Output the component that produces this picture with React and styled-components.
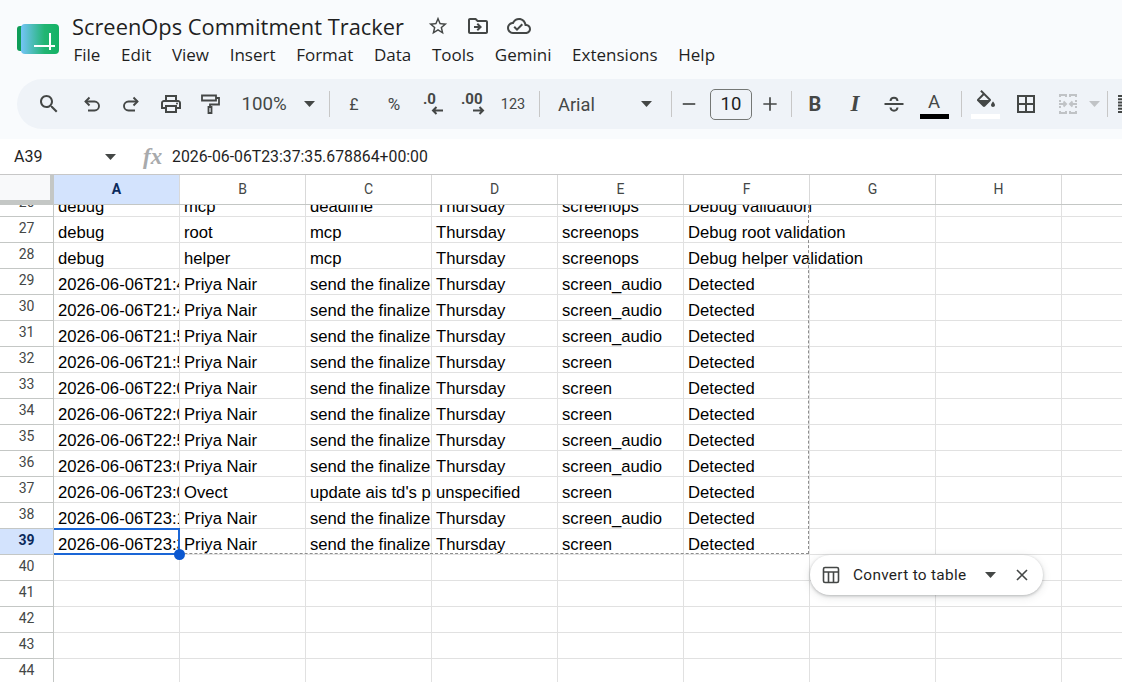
import React from 'react'
import styled, { createGlobalStyle } from 'styled-components'

const GlobalStyle = createGlobalStyle`
  html, body {
    margin: 0;
    height: 100%;
    overflow: hidden;
    background: #fff;
  }
`

const columns = ['A', 'B', 'C', 'D', 'E', 'F', 'G', 'H', '']

const dataRows = [
  [26, 'debug', 'mcp', 'deadline', 'Thursday', 'screenops', 'Debug validation'],
  [27, 'debug', 'root', 'mcp', 'Thursday', 'screenops', 'Debug root validation'],
  [28, 'debug', 'helper', 'mcp', 'Thursday', 'screenops', 'Debug helper validation'],
  [29, '2026-06-06T21:48:12.431907+00:00', 'Priya Nair', 'send the finalized deck', 'Thursday', 'screen_audio', 'Detected'],
  [30, '2026-06-06T21:49:12.431907+00:00', 'Priya Nair', 'send the finalized deck', 'Thursday', 'screen_audio', 'Detected'],
  [31, '2026-06-06T21:53:12.431907+00:00', 'Priya Nair', 'send the finalized deck', 'Thursday', 'screen_audio', 'Detected'],
  [32, '2026-06-06T21:55:12.431907+00:00', 'Priya Nair', 'send the finalized deck', 'Thursday', 'screen', 'Detected'],
  [33, '2026-06-06T22:01:12.431907+00:00', 'Priya Nair', 'send the finalized deck', 'Thursday', 'screen', 'Detected'],
  [34, '2026-06-06T22:04:12.431907+00:00', 'Priya Nair', 'send the finalized deck', 'Thursday', 'screen', 'Detected'],
  [35, '2026-06-06T22:53:12.431907+00:00', 'Priya Nair', 'send the finalized deck', 'Thursday', 'screen_audio', 'Detected'],
  [36, '2026-06-06T23:01:12.431907+00:00', 'Priya Nair', 'send the finalized deck', 'Thursday', 'screen_audio', 'Detected'],
  [37, '2026-06-06T23:05:12.431907+00:00', 'Ovect', "update ais td's progress", 'unspecified', 'screen', 'Detected'],
  [38, '2026-06-06T23:11:12.431907+00:00', 'Priya Nair', 'send the finalized deck', 'Thursday', 'screen_audio', 'Detected'],
  [39, '2026-06-06T23:37:35.678864+00:00', 'Priya Nair', 'send the finalized deck', 'Thursday', 'screen', 'Detected'],
  [40], [41], [42], [43], [44], [45],
]

const Icon = ({ size = 24, children, ...rest }) => (
  <svg width={size} height={size} viewBox='0 0 24 24' fill='none' stroke='currentColor' strokeWidth='2' {...rest}>
    {children}
  </svg>
)

const Solid = ({ size = 24, d, children }) => (
  <svg width={size} height={size} viewBox='0 0 24 24' fill='currentColor'>
    <path d={d} />
    {children}
  </svg>
)

const Caret = ({ color = '#444746' }) => (
  <svg width='11' height='6' viewBox='0 0 12 6.500'><path d='M0 0h12L6 6.500z' fill={color} /></svg>
)

function Logo() {
  return (
    <svg width='42' height='32' viewBox='0 0 42 32'>
      <defs>
        <linearGradient id='logoFill' x1='0' x2='1' y1='0' y2='0'>
          <stop offset='0' stopColor='#74c4f8' />
          <stop offset='0.62' stopColor='#22b573' />
          <stop offset='1' stopColor='#14b264' />
        </linearGradient>
      </defs>
      <rect x='0' y='2' width='14' height='25' rx='3' fill='#0f9d58' />
      <rect x='4' y='0' width='38' height='30' rx='4' fill='url(#logoFill)' />
      <path d='M17 22h21M33 9v17' stroke='#fff' strokeWidth='2' fill='none' />
    </svg>
  )
}

export default function App() {
  return (
    <Page>
      <GlobalStyle />
      <Header>
        <LogoSlot><Logo /></LogoSlot>
        <TitleBlock>
          <TitleRow>
            <Title>ScreenOps Commitment Tracker</Title>
            <TitleIcons>
              <Solid size={22} d='M22 9.240l-7.190-.620L12 2 9.190 8.630 2 9.240l5.460 4.730L5.820 21 12 17.270 18.180 21l-1.630-7.030L22 9.240zM12 15.400l-3.760 2.270 1-4.280-3.320-2.880 4.380-.380L12 6.100l1.710 4.040 4.380.380-3.320 2.880 1 4.280L12 15.400z' />
              <Solid size={24} d='M20 6h-8l-2-2H4c-1.100 0-2 .9-2 2v12c0 1.100.9 2 2 2h16c1.100 0 2-.9 2-2V8c0-1.100-.9-2-2-2zm0 12H4V6h5.170l2 2H20v10zm-8.010-9l-1.410 1.410L12.160 12H8v2h4.160l-1.590 1.590L11.990 17 16 13.010 11.990 9z' />
              <Solid size={24} d='M19.350 10.040C18.670 6.590 15.640 4 12 4 9.110 4 6.600 5.640 5.350 8.040 2.340 8.360 0 10.910 0 14c0 3.310 2.690 6 6 6h13c2.760 0 5-2.240 5-5 0-2.640-2.050-4.780-4.650-4.960zM19 18H6c-2.210 0-4-1.790-4-4 0-2.050 1.530-3.760 3.560-3.970l1.070-.110.500-.950C8.080 7.140 9.940 6 12 6c2.620 0 4.880 1.860 5.390 4.430l.3 1.500 1.530.11c1.560.1 2.780 1.410 2.780 2.960 0 1.650-1.350 3-3 3zm-9-3.820l-2.090-2.090L6.500 13.500 10 17l6.010-6.010-1.410-1.410z' />
            </TitleIcons>
          </TitleRow>
          <Menu>
            {['File', 'Edit', 'View', 'Insert', 'Format', 'Data', 'Tools', 'Gemini', 'Extensions', 'Help'].map((m) => (
              <MenuItem key={m}>{m}</MenuItem>
            ))}
          </Menu>
        </TitleBlock>
      </Header>

      <HeaderBottom>
        <Toolbar>
          <ToolSlot $w={30}>
            <Solid d='M15.500 14h-.79l-.28-.27C15.410 12.590 16 11.110 16 9.500 16 5.910 13.090 3 9.500 3S3 5.910 3 9.500 5.910 16 9.500 16c1.610 0 3.090-.59 4.230-1.570l.27.28v.79l5 4.990L20.490 19l-4.990-5zm-6 0C7.010 14 5 11.990 5 9.500S7.010 5 9.500 5 14 7.010 14 9.500 11.990 14 9.500 14z' />
          </ToolSlot>
          <ToolSlot $w={40} $ml={8}>
            <Icon strokeWidth='1.900'><path d='M9.500 5.500L5.500 9.500l4 4' /><path d='M5.500 9.500h9a4.500 4.500 0 0 1 0 9H8' /></Icon>
          </ToolSlot>
          <ToolSlot $w={38}>
            <Icon strokeWidth='1.900'><path d='M14.500 5.500l4 4-4 4' /><path d='M18.500 9.500h-9a4.500 4.500 0 0 0 0 9H16' /></Icon>
          </ToolSlot>
          <ToolSlot $w={42}>
            <Solid d='M19 8h-1V3H6v5H5c-1.660 0-3 1.340-3 3v6h4v4h12v-4h4v-6c0-1.660-1.340-3-3-3zM8 5h8v3H8V5zm8 12v2H8v-4h8v2zm2-2v-2H6v2H4v-4c0-.55.45-1 1-1h14c.55 0 1 .45 1 1v4h-2z'>
              <circle cx='18' cy='11.500' r='1' />
            </Solid>
          </ToolSlot>
          <ToolSlot $w={36}>
            <Icon strokeWidth='1.800'><path d='M4 3.500h14v5H4z' /><path d='M18 6h3v6.500h-9V15' /><path d='M10.500 15h3v6h-3z' /></Icon>
          </ToolSlot>
          <Zoom>100%</Zoom>
          <CaretSlot $w={18}><Caret /></CaretSlot>
          <Divider $l={11} />
          <TextTool $w={48}>£</TextTool>
          <TextTool $w={32} $size={17}>%</TextTool>
          <ToolSlot $w={44}>
            <svg width='28' height='28' viewBox='0 0 28 28' fill='none' stroke='currentColor'>
              <text x='5' y='14' fontFamily='Roboto, sans-serif' fontWeight='700' fontSize='15' fill='currentColor' stroke='none'>.0</text>
              <path d='M25 20.500H15M18.500 17L15 20.500l3.500 3.500' strokeWidth='2' />
            </svg>
          </ToolSlot>
          <ToolSlot $w={40}>
            <svg width='32' height='28' viewBox='0 0 32 28' fill='none' stroke='currentColor'>
              <text x='3' y='14' fontFamily='Roboto, sans-serif' fontWeight='700' fontSize='15' fill='currentColor' stroke='none'>.00</text>
              <path d='M15 20.500h10M21.500 17l3.500 3.500-3.500 3.500' strokeWidth='2' />
            </svg>
          </ToolSlot>
          <TextTool $w={38} $size={14.500}>123</TextTool>
          <Divider $l={7} />
          <FontName>Arial</FontName>
          <CaretSlot $w={28}><Caret /></CaretSlot>
          <Divider $l={11} />
          <ToolSlot $w={34}><Icon size={20}><path d='M4.500 12h15' /></Icon></ToolSlot>
          <SizeBox>10</SizeBox>
          <ToolSlot $w={36}><Icon size={20}><path d='M4 12h16M12 4v16' /></Icon></ToolSlot>
          <Divider $l={3} />
          <BoldTool $w={46}>B</BoldTool>
          <ItalicTool $w={34}>I</ItalicTool>
          <ToolSlot $w={44}>
            <Icon>
              <path d='M2.500 12h19' />
              <path d='M8.500 9c.2-2 1.600-3.200 3.500-3.200s3.300 1.200 3.500 3.200M8.500 15.500c.2 2 1.600 3.200 3.500 3.200s3.300-1.200 3.500-3.200' />
            </Icon>
          </ToolSlot>
          <ColorTool $w={36}>
            <ColorLetter>A</ColorLetter>
            <ColorBar $color='#000' />
          </ColorTool>
          <Divider $l={9} />
          <ColorTool $w={47}>
            <Solid d='M16.560 8.940L7.620 0 6.210 1.410l2.380 2.380-5.150 5.150c-.59.59-.59 1.540 0 2.120l5.500 5.500c.29.29.68.44 1.060.44s.77-.15 1.060-.44l5.500-5.500c.59-.58.59-1.530 0-2.110zM5.210 10L10 5.210 14.790 10H5.210zM19 11.500s-2 2.170-2 3.500c0 1.100.9 2 2 2s2-.9 2-2c0-1.330-2-3.500-2-3.500z' />
            <ColorBar $color='#fff' />
          </ColorTool>
          <ToolSlot $w={34}>
            <Icon><path d='M4 4h16v16H4zM12 4v16M4 12h16' /></Icon>
          </ToolSlot>
          <ToolSlot $w={38} $ml={6} $muted>
            <Icon>
              <path d='M10 5V3H4v2M4 8v2M4 14v2M4 19v2h6v-2M14 5V3h6v2M20 8v2M20 14v2M20 19v2h-6v-2' />
              <path d='M3 12h7M7.500 9.500l2.500 2.500-2.500 2.500M21 12h-7M16.500 9.500L14 12l2.500 2.500' />
            </Icon>
          </ToolSlot>
          <CaretSlot $w={14}><Caret color='#c0c3c6' /></CaretSlot>
          <Divider $l={6} />
          <ToolSlot $w={24}>
            <svg width='4' height='18' viewBox='0 0 4 18' fill='currentColor'>
              <path d='M0 0h4v2H0zM0 3.200h4v2H0zM0 6.400h4v2H0zM0 9.600h4v2H0zM0 12.800h4v2H0zM0 16h4v2H0z' />
            </svg>
          </ToolSlot>
        </Toolbar>
      </HeaderBottom>

      <FormulaBar>
        <NameBox>A39</NameBox>
        <CaretSlot $w={24}><Caret /></CaretSlot>
        <FxMark>fx</FxMark>
        <FormulaText>2026-06-06T23:37:35.678864+00:00</FormulaText>
      </FormulaBar>

      <Sheet>
        <ColumnHeader>
          <Corner />
          {columns.map((c) => (
            <ColumnCell key={c || 'rest'} $active={c === 'A'}>{c}</ColumnCell>
          ))}
        </ColumnHeader>
        <Body>
          {dataRows.map(([num, ...cells], i) => (
            <Row key={num} $clipped={i === 0}>
              <RowNumber $active={num === 39}>{num}</RowNumber>
              {columns.map((c, j) => (
                <Cell key={j} $overflow={j === 5 && i < 3}>
                  {cells[j] && <CellText $overflow={j === 5 && i < 3}>{cells[j]}</CellText>}
                </Cell>
              ))}
            </Row>
          ))}
          <CopyRange />
          <ActiveCell><Handle /></ActiveCell>
          <ConvertPill>
            <svg width='18' height='18' viewBox='0 0 18 18' fill='none' stroke='#444746' strokeWidth='1.600'>
              <rect x='1.500' y='1.500' width='15' height='15' rx='1.500' />
              <path d='M1.500 6h15M6.500 6v10.500M11.500 6v10.500' />
            </svg>
            <PillLabel>Convert to table</PillLabel>
            <Caret />
            <CloseMark width='12' height='12' viewBox='0 0 12 12' stroke='#444746' strokeWidth='1.600'>
              <path d='M1 1l10 10M11 1L1 11' />
            </CloseMark>
          </ConvertPill>
        </Body>
      </Sheet>
    </Page>
  )
}

const Page = styled.div`
  width: 1122px;
  height: 682px;
  overflow: hidden;
  display: flex;
  flex-direction: column;
  background: #fff;
  color: #1f1f1f;
  font-family: 'Liberation Sans', Arial, sans-serif;
`
const Header = styled.header`
  height: 79px;
  flex: none;
  display: flex;
  background: #f9fbfd;
  padding-left: 17px;
  box-sizing: border-box;
`
const LogoSlot = styled.div`
  width: 55px;
  padding-top: 24px;
`
const TitleBlock = styled.div`
  display: flex;
  flex-direction: column;
`
const TitleRow = styled.div`
  display: flex;
  align-items: center;
  height: 30px;
  margin-top: 11px;
`
const Title = styled.div`
  font-family: 'Open Sans', sans-serif;
  font-size: 21.850px;
  width: 355px;
  white-space: nowrap;
  color: #1f1f1f;
`
const TitleIcons = styled.div`
  display: flex;
  align-items: center;
  gap: 17px;
  color: #444746;
`
const Menu = styled.nav`
  display: flex;
  gap: 20.650px;
  margin: 2px 0 0 1.500px;
`
const MenuItem = styled.span`
  font-family: 'Open Sans', sans-serif;
  font-size: 17px;
  line-height: 24px;
  color: #1f1f1f;
`
const HeaderBottom = styled.div`
  height: 60px;
  flex: none;
  background: #f9fbfd;
  padding-left: 17px;
  box-sizing: border-box;
`
const Toolbar = styled.div`
  height: 50px;
  width: 1130px;
  display: flex;
  align-items: center;
  background: #eff3f8;
  border-radius: 25px;
  padding-left: 17px;
  box-sizing: border-box;
  color: #444746;
  white-space: nowrap;
`
const ToolSlot = styled.div`
  width: ${(p) => p.$w}px;
  margin-left: ${(p) => p.$ml || 0}px;
  flex: none;
  display: flex;
  align-items: center;
  justify-content: center;
  color: ${(p) => (p.$muted ? '#c0c3c6' : '#444746')};
`
const CaretSlot = styled(ToolSlot)`
  height: 24px;
`
const TextTool = styled(ToolSlot)`
  font-family: Roboto, sans-serif;
  font-size: ${(p) => p.$size || 16}px;
`
const Zoom = styled.div`
  width: 72px;
  flex: none;
  font-family: Roboto, sans-serif;
  font-size: 18.700px;
  text-align: center;
`
const Divider = styled.div`
  width: 1px;
  height: 26px;
  flex: none;
  background: #c7c7c7;
  margin-left: ${(p) => p.$l}px;
`
const FontName = styled.div`
  width: 92px;
  flex: none;
  padding-left: 18px;
  box-sizing: border-box;
  font-family: Roboto, sans-serif;
  font-size: 18.300px;
`
const SizeBox = styled.div`
  width: 42px;
  height: 31px;
  flex: none;
  margin-left: 4px;
  box-sizing: border-box;
  border: 1px solid #747775;
  border-radius: 5px;
  text-align: center;
  font-family: Roboto, sans-serif;
  font-size: 18.500px;
  line-height: 29px;
  color: #1f1f1f;
`
const BoldTool = styled(ToolSlot)`
  font-family: Roboto, sans-serif;
  font-size: 20px;
  font-weight: 700;
`
const ItalicTool = styled(ToolSlot)`
  font-family: 'Liberation Serif', serif;
  font-size: 23px;
  font-weight: 700;
  font-style: italic;
`
const ColorTool = styled.div`
  width: ${(p) => p.$w}px;
  flex: none;
  display: flex;
  flex-direction: column;
  align-items: center;
  margin-top: 1px;
`
const ColorLetter = styled.span`
  font-family: Roboto, sans-serif;
  font-size: 18.500px;
  line-height: 24px;
`
const ColorBar = styled.div`
  width: 29px;
  height: 5px;
  background: ${(p) => p.$color};
`
const FormulaBar = styled.div`
  height: 36px;
  flex: none;
  display: flex;
  align-items: center;
  background: #fff;
  padding-left: 14px;
  box-sizing: border-box;
  border-bottom: 1px solid #c7c7c7;
`
const NameBox = styled.div`
  width: 84px;
  font-family: Roboto, sans-serif;
  font-size: 16px;
  color: #1f1f1f;
`
const FxMark = styled.div`
  width: 29px;
  margin-left: 21px;
  font-family: 'Liberation Serif', serif;
  font-style: italic;
  font-weight: 700;
  font-size: 23px;
  color: #a8aaac;
`
const FormulaText = styled.div`
  font-family: Roboto, sans-serif;
  font-size: 15.800px;
  color: #1f1f1f;
`
const Sheet = styled.div`
  flex: 1;
  min-height: 0;
  display: flex;
  flex-direction: column;
  overflow: hidden;
`
const ColumnHeader = styled.div`
  height: 30px;
  flex: none;
  display: flex;
  box-sizing: border-box;
  border-bottom: 1px solid #c4c7c5;
`
const Corner = styled.div`
  width: 54px;
  flex: none;
  box-sizing: border-box;
  background: #f8f9fa;
  border-right: 4px solid #c4c7c5;
  border-bottom: 5px solid #c4c7c5;
  margin-bottom: -1px;
`
const ColumnCell = styled.div`
  width: 126px;
  flex: none;
  box-sizing: border-box;
  border-right: 1px solid #d9d9d9;
  text-align: center;
  font-family: Roboto, sans-serif;
  font-size: 14px;
  line-height: 28px;
  font-weight: ${(p) => (p.$active ? 700 : 400)};
  background: ${(p) => (p.$active ? '#d3e3fd' : '#fff')};
  color: ${(p) => (p.$active ? '#0b2a5b' : '#444746')};
`
const Body = styled.div`
  position: relative;
  flex: 1;
  min-height: 0;
  overflow: hidden;
`
const Row = styled.div`
  display: flex;
  height: ${(p) => (p.$clipped ? 12 : 26)}px;
  align-items: flex-end;
  overflow: hidden;
`
const RowNumber = styled.div`
  width: 54px;
  height: 26px;
  flex: none;
  box-sizing: border-box;
  border-right: 1px solid #c4c7c5;
  border-bottom: 1px solid #c4c7c5;
  text-align: center;
  font-family: Roboto, sans-serif;
  font-size: 14px;
  line-height: 22px;
  font-weight: ${(p) => (p.$active ? 700 : 400)};
  background: ${(p) => (p.$active ? '#d3e3fd' : '#fff')};
  color: ${(p) => (p.$active ? '#0b2a5b' : '#444746')};
`
const Cell = styled.div`
  position: relative;
  width: 126px;
  height: 26px;
  flex: none;
  box-sizing: border-box;
  padding-left: 4px;
  border-right: ${(p) => (p.$overflow ? '0' : '1px solid #e1e1e1')};
  border-bottom: 1px solid #e1e1e1;
  overflow: ${(p) => (p.$overflow ? 'visible' : 'hidden')};
  font-size: 16.670px;
  line-height: 31px;
  white-space: nowrap;
  color: #000;
`
const CellText = styled.span`
  position: ${(p) => (p.$overflow ? 'relative' : 'static')};
  z-index: 1;
`
const ActiveCell = styled.div`
  position: absolute;
  left: 54px;
  top: 323px;
  width: 126px;
  height: 27px;
  box-sizing: border-box;
  border: 2px solid #1a66d6;
  border-left-width: 0;
  z-index: 2;
`
const Handle = styled.div`
  position: absolute;
  right: -7px;
  bottom: -7px;
  width: 11px;
  height: 11px;
  border-radius: 50%;
  background: #0b57d0;
`
const CopyRange = styled.div`
  position: absolute;
  left: 54px;
  top: 0;
  width: 755px;
  height: 349px;
  box-sizing: border-box;
  border-right: 1px dashed #8d8d8d;
  border-bottom: 1px dashed #8d8d8d;
  pointer-events: none;
  z-index: 2;
`
const ConvertPill = styled.div`
  position: absolute;
  left: 810px;
  top: 350px;
  width: 233px;
  height: 40px;
  box-sizing: border-box;
  display: flex;
  align-items: center;
  padding-left: 12px;
  background: #fff;
  border-radius: 20px;
  box-shadow: 0 1px 3px rgba(60, 64, 67, 0.3), 0 2px 8px rgba(60, 64, 67, 0.15);
  z-index: 3;
`
const PillLabel = styled.span`
  font-family: Roboto, sans-serif;
  font-size: 15.400px;
  letter-spacing: 0.3px;
  width: 114px;
  white-space: nowrap;
  margin: 0 18px 0 13px;
  color: #1f1f1f;
`
const CloseMark = styled.svg`
  margin-left: 20px;
`
